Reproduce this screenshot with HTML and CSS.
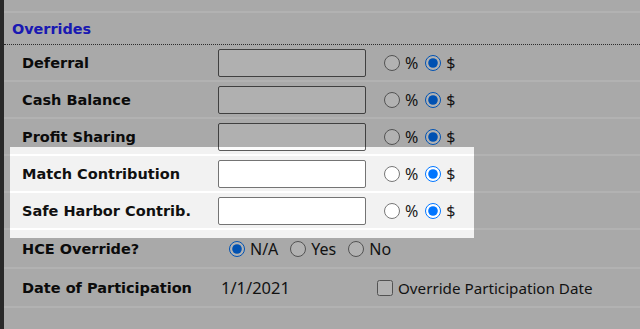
FILE: index.html
```html
<!DOCTYPE html>
<html>
<head>
  <title>Overrides</title>
  <link rel="stylesheet" href="styles.css">
</head>
<body>

  <div class="page">
    <div class="top-strip"></div>
    <div class="section-title">Overrides</div>

    <div class="row">
      <div class="label">Deferral</div>
      <input class="amount" type="text" disabled>
      <div class="choice">
        <input type="radio" name="def"><span>%</span>
        <input type="radio" name="def" checked><span>$</span>
      </div>
    </div>

    <div class="row">
      <div class="label">Cash Balance</div>
      <input class="amount" type="text" disabled>
      <div class="choice">
        <input type="radio" name="cb"><span>%</span>
        <input type="radio" name="cb" checked><span>$</span>
      </div>
    </div>

    <div class="row">
      <div class="label">Profit Sharing</div>
      <input class="amount" type="text" disabled>
      <div class="choice">
        <input type="radio" name="ps"><span>%</span>
        <input type="radio" name="ps" checked><span>$</span>
      </div>
    </div>

    <div class="row">
      <div class="label">Match Contribution</div>
      <input class="amount" type="text">
      <div class="choice">
        <input type="radio" name="mc"><span>%</span>
        <input type="radio" name="mc" checked><span>$</span>
      </div>
    </div>

    <div class="row">
      <div class="label">Safe Harbor Contrib.</div>
      <input class="amount" type="text">
      <div class="choice">
        <input type="radio" name="sh"><span>%</span>
        <input type="radio" name="sh" checked><span>$</span>
      </div>
    </div>

    <div class="row tall">
      <div class="label">HCE Override?</div>
      <div class="choice hce">
        <input type="radio" name="hce" checked><span>N/A</span>
        <input type="radio" name="hce"><span>Yes</span>
        <input type="radio" name="hce"><span>No</span>
      </div>
    </div>

    <div class="row tall">
      <div class="label">Date of Participation</div>
      <div class="date-value">1/1/2021</div>
      <label class="check">
        <input type="checkbox"><span>Override Participation Date</span>
      </label>
    </div>

    <div class="row last"></div>
  </div>

  <div class="spotlight"></div>

</body>
</html>
```

FILE: styles.css
```css
body {
  margin: 0;
  background-color: #f2f2f2;
  font-family: "DejaVu Sans", Verdana, sans-serif;
  overflow: hidden;
}

.page {
  border-left: 4px solid #3c3c3c;
  min-height: 329px;
  background-color: #f2f2f2;
}

.top-strip {
  height: 11px;
  border-bottom: 2px solid #ffffff;
}

.section-title {
  height: 32px;
  padding-left: 8px;
  line-height: 32px;
  color: #2424ff;
  font-weight: bold;
  font-size: 14.4px;
  border-bottom: 1px dotted #404040;
  box-sizing: border-box;
}

.row {
  display: flex;
  align-items: center;
  height: 35px;
  padding-left: 18px;
  border-bottom: 2px solid #ffffff;
}

.row.tall {
  height: 37px;
}

.row.last {
  border-bottom: none;
}

.label {
  width: 196px;
  flex-shrink: 0;
  font-weight: bold;
  font-size: 14.5px;
  color: #101010;
  padding-top: 1px;
}

.amount {
  width: 148px;
  height: 28px;
  box-sizing: border-box;
  margin: 0;
  border: 1px solid #747474;
  border-radius: 2px;
  background-color: #ffffff;
}

.amount:disabled {
  background-color: #fcfcfc;
  border-color: #5c5c5c;
}

.choice {
  display: flex;
  align-items: center;
  margin-left: 18px;
  font-family: "Noto Sans", "Open Sans", sans-serif;
  font-size: 16px;
  color: #1a1a1a;
}

.choice input,
.check input {
  width: 16px;
  height: 16px;
  margin: 0 5px 0 0;
}

.choice span {
  margin-right: 7px;
}

.choice.hce {
  margin-left: 11px;
}

.choice.hce span {
  margin-right: 12px;
}

.date-value {
  width: 156px;
  padding-left: 3px;
  flex-shrink: 0;
  font-family: "Noto Sans", "Open Sans", sans-serif;
  font-size: 16.5px;
  color: #1a1a1a;
}

.check {
  display: flex;
  align-items: center;
  font-family: "Noto Sans", "Open Sans", sans-serif;
  font-size: 15.2px;
  color: #1a1a1a;
}

.spotlight {
  position: absolute;
  left: 10px;
  top: 147px;
  width: 464px;
  height: 91px;
  box-shadow: 0 0 2px 2000px rgba(0, 0, 0, 0.3);
  pointer-events: none;
}
```
